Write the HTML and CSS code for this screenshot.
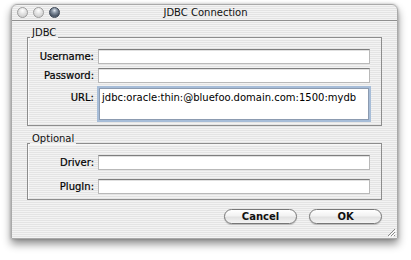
FILE: index.html
```html
<!DOCTYPE html>
<html lang="en">
<head>
    <meta charset="UTF-8">
    <meta name="viewport" content="width=device-width, initial-scale=1.0">
    <title>JDBC Connection</title>
    <link rel="stylesheet" href="styles.css">
</head>
<body>

    <div class="window">
        <div class="titlebar">
            <div class="lights">
                <span class="light"></span>
                <span class="light"></span>
                <span class="light light-dark"></span>
            </div>
            <div class="title">JDBC Connection</div>
        </div>

        <div class="content">
            <fieldset class="group group-jdbc">
                <legend>JDBC</legend>
                <div class="row">
                    <label for="username">Username:</label>
                    <input type="text" id="username" class="field">
                </div>
                <div class="row">
                    <label for="password">Password:</label>
                    <input type="password" id="password" class="field">
                </div>
                <div class="row row-top">
                    <label for="url">URL:</label>
                    <textarea id="url" class="field field-area">jdbc:oracle:thin:@bluefoo.domain.com:1500:mydb</textarea>
                </div>
            </fieldset>

            <fieldset class="group group-optional">
                <legend>Optional</legend>
                <div class="row">
                    <label for="driver">Driver:</label>
                    <input type="text" id="driver" class="field">
                </div>
                <div class="row">
                    <label for="plugin">PlugIn:</label>
                    <input type="text" id="plugin" class="field">
                </div>
            </fieldset>

            <div class="buttons">
                <button type="button" class="btn">Cancel</button>
                <button type="button" class="btn">OK</button>
            </div>
        </div>

        <svg class="grip" width="10" height="10" viewBox="0 0 10 10">
            <path d="M9 2 L2 9 M9 5 L5 9 M9 8 L8 9" stroke="#8a8a8a" stroke-width="1" fill="none"/>
            <path d="M10 3 L3 10 M10 6 L6 10" stroke="#ffffff" stroke-width="1" fill="none"/>
        </svg>
    </div>

</body>
</html>
```

FILE: styles.css
```css
* {
    box-sizing: border-box;
    margin: 0;
    padding: 0;
    font-family: 'DejaVu Sans', 'Liberation Sans', sans-serif;
}

body {
    background-color: #ffffff;
    width: 411px;
    height: 260px;
    overflow: hidden;
}

.window {
    position: relative;
    width: 387px;
    height: 235px;
    margin: 4px 0 0 11px;
    border: 1px solid #a9a9a9;
    border-radius: 6px 6px 0 0;
    background: repeating-linear-gradient(to bottom, #f3f3f3 0, #f3f3f3 1px, #e4e4e4 1px, #e4e4e4 2px);
    box-shadow: 0 5px 9px rgba(0, 0, 0, 0.45), 0 0 3px rgba(0, 0, 0, 0.25);
}

.titlebar {
    position: relative;
    height: 16px;
    border-bottom: 1px solid #8f8f8f;
    border-radius: 6px 6px 0 0;
    display: flex;
    align-items: center;
    justify-content: center;
}

.lights {
    position: absolute;
    left: 5px;
    top: 2px;
    display: flex;
    gap: 5px;
}

.light {
    width: 11px;
    height: 11px;
    border-radius: 50%;
    border: 1px solid #9c9c9c;
    background: radial-gradient(circle at 50% 30%, #ffffff 0, #e2e2e2 45%, #c4c4c4 100%);
}

.light-dark {
    border-color: #3c4654;
    background: radial-gradient(circle at 50% 28%, #dfe6ee 0, #8d99a8 30%, #4c5868 70%, #6f7b8a 100%);
}

.title {
    font-size: 10px;
    color: #111;
    line-height: 12px;
    margin-left: 2px;
}

.content {
    padding: 0 15px;
}

.group {
    border: 1px solid #8d8d8d;
    box-shadow: inset 1px 1px 0 rgba(255, 255, 255, 0.7);
    padding: 2px 11px 5px 0;
    display: flex;
    flex-direction: column;
}

.group legend {
    font-size: 10px;
    line-height: 12px;
    padding: 0 2px 8px 2px;
    margin-left: 2px;
    color: #111;
}

.group-jdbc {
    margin-top: 6px;
    gap: 4px;
}

.group-optional {
    margin-top: 7px;
    gap: 9px;
}

.row {
    display: flex;
    align-items: center;
    gap: 4px;
}

.row-top {
    align-items: flex-start;
}

.row label {
    width: 66px;
    text-align: right;
    font-size: 10px;
    line-height: 12px;
    color: #000;
    -webkit-text-stroke: 0.2px #000;
}

.row-top label {
    padding-top: 5px;
}

.field {
    width: 272px;
    height: 15px;
    border: 1px solid #b9b9b9;
    border-top-color: #7e7e7e;
    background: #fff;
    box-shadow: inset 0 1px 0 #e0e0e0;
    outline: none;
    font-size: 10px;
}

.field-area {
    width: 270px;
    height: 32px;
    margin: 1px 0 0 1px;
    padding: 2px 2px;
    border: 1px solid #8c9bb0;
    box-shadow: 0 0 0 2px #a7bdd8;
    resize: none;
    overflow: hidden;
    line-height: 13px;
    color: #000;
}

.buttons {
    display: flex;
    justify-content: flex-end;
    gap: 12px;
    margin-top: 9px;
}

.btn {
    width: 73px;
    height: 15px;
    border: 1px solid #777;
    border-radius: 8px;
    background: linear-gradient(to bottom, #ffffff 0%, #f2f2f2 45%, #e2e2e2 55%, #f4f4f4 100%);
    box-shadow: 0 1px 1px rgba(0, 0, 0, 0.2);
    font-size: 10px;
    font-weight: bold;
    line-height: 12px;
    color: #111;
}

.grip {
    position: absolute;
    right: 1px;
    bottom: 1px;
}
```
